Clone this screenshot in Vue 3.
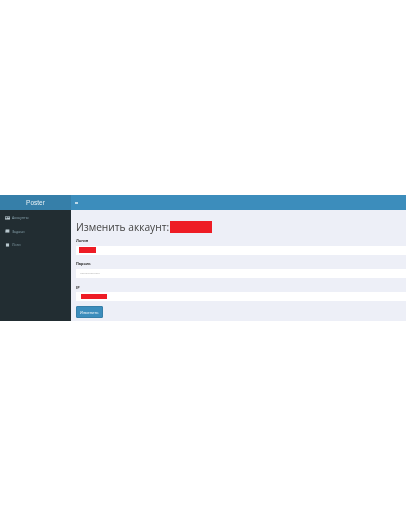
<script setup>
const menu = [
  { label: 'Аккаунты', icon: 'accounts' },
  { label: 'Задачи', icon: 'tasks' },
  { label: 'Логи', icon: 'logs' }
]
</script>

<template>
  <div class="page">
    <div class="admin">
      <aside class="sidebar">
        <div class="logo">Poster</div>
        <nav class="menu">
          <a v-for="item in menu" :key="item.label" class="item">
            <svg class="icon" viewBox="0 0 8 6">
              <template v-if="item.icon === 'accounts'">
                <rect x="0" y="0.5" width="8" height="5" fill="#b8c7ce" />
                <rect x="1" y="1.5" width="2" height="2" fill="#222d32" />
                <rect x="4" y="1.5" width="3" height="1" fill="#222d32" />
              </template>
              <template v-else-if="item.icon === 'tasks'">
                <rect x="1" y="0.5" width="6" height="5" fill="#b8c7ce" />
                <rect x="0" y="2" width="1" height="3.5" fill="#8fa0a8" />
              </template>
              <rect v-else x="1.5" y="0.5" width="5" height="5" fill="#b8c7ce" />
            </svg>
            <span>{{ item.label }}</span>
          </a>
        </nav>
      </aside>
      <main class="main">
        <header class="topbar"><span class="burger"></span></header>
        <section class="content">
          <h1 class="title"><span>Изменить аккаунт:</span><span class="mask title-mask"></span></h1>
          <div class="group">
            <label class="label">Логин</label>
            <div class="input"><span class="mask login-mask"></span></div>
          </div>
          <div class="group">
            <label class="label">Пароль</label>
            <div class="input"><span class="dots">••••••••••••••••••••••••</span></div>
          </div>
          <div class="group">
            <label class="label">IP</label>
            <div class="input"><span class="mask ip-mask"></span></div>
          </div>
          <button class="btn">Изменить</button>
        </section>
      </main>
    </div>
  </div>
</template>

<style scoped>
.page { width: 406px; height: 516px; padding-top: 195px; box-sizing: border-box; background: #fff; font-family: "Open Sans", "Liberation Sans", sans-serif; overflow: hidden; }
.admin { display: flex; height: 126px; filter: blur(0.3px); }
.sidebar { width: 71px; flex: none; background: #222d32; }
.logo { height: 15px; line-height: 15px; background: #367fa9; color: #e8f1f6; text-align: center; font-size: 6.5px; font-family: "Liberation Sans", sans-serif; }
.menu { display: flex; flex-direction: column; padding-top: 1px; }
.item { height: 13.5px; display: flex; align-items: center; gap: 2px; padding-left: 5px; color: #8aa4af; font-size: 3.6px; }
.icon { width: 5px; height: 4px; }
.main { flex: 1; display: flex; flex-direction: column; background: #edeff7; }
.topbar { height: 15px; background: #3c8dbc; display: flex; align-items: center; padding-left: 4px; }
.burger { width: 3px; height: 2px; background: #bcd8e8; }
.content { display: flex; flex-direction: column; padding: 10px 0 0 5px; }
.title { margin: 0 0 -2.5px; font-size: 10.2px; line-height: 14px; font-weight: 400; color: #444; display: flex; align-items: center; gap: 1px; }
.mask { display: block; background: #ee1c25; }
.title-mask { width: 42px; height: 11.5px; }
.group { display: flex; flex-direction: column; margin-top: 6.5px; }
.label { font-size: 3.8px; line-height: 5px; height: 5px; font-weight: 700; color: #333; margin-bottom: 2.5px; }
.input { height: 9.3px; background: #fff; display: flex; align-items: center; padding-left: 3px; box-sizing: border-box; }
.dots { font-size: 2.2px; color: #777; margin-left: 1px; }
.login-mask { width: 17px; height: 6.5px; }
.ip-mask { width: 26.5px; height: 5.5px; margin-left: 1.5px; }
.btn { align-self: flex-start; width: 26.5px; height: 11.5px; background: #3c8dbc; border: 0.5px solid #367fa9; border-radius: 1px; color: #fff; font-size: 3.8px; padding: 0; margin-top: 5px; font-family: inherit; }
</style>
